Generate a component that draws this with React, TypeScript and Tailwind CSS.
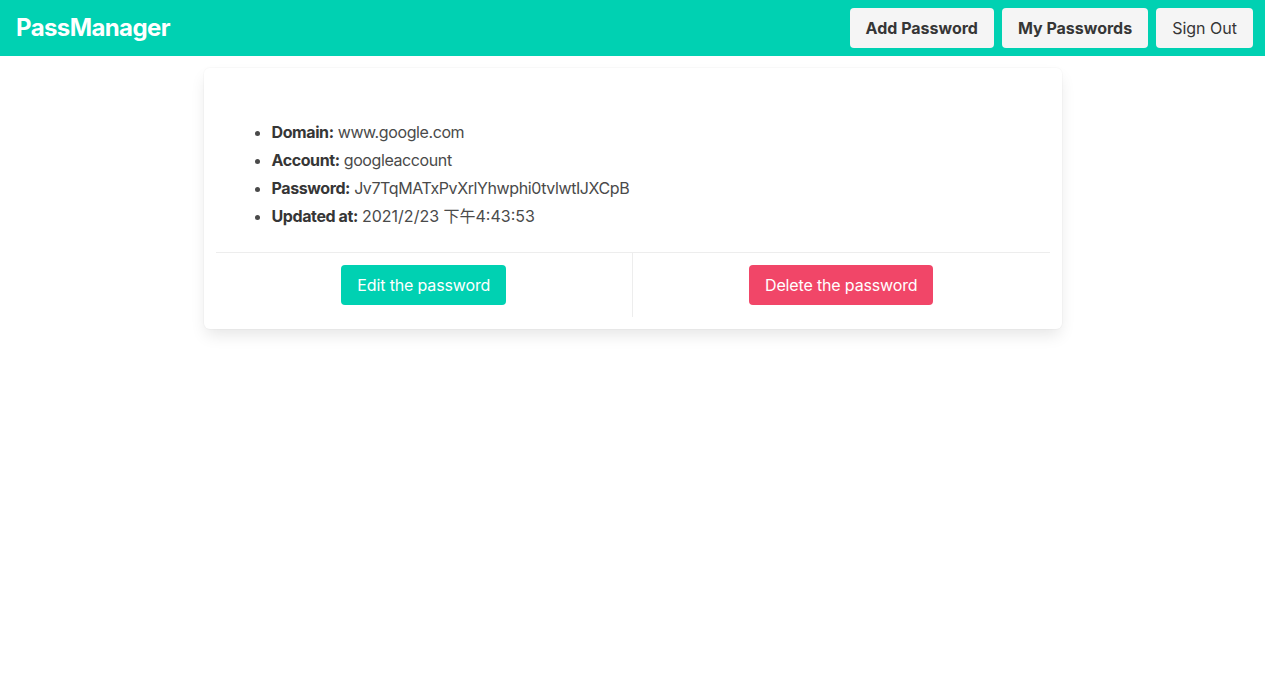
const font = "font-['Inter','Noto_Sans_CJK_SC',sans-serif]";

function NavButton({ label, bold }: { label: string; bold?: boolean }) {
  return (
    <button
      className={`h-10 rounded-[4px] bg-[#f5f5f5] px-4 text-base text-[#363636] ${
        bold ? "font-bold" : "font-normal"
      }`}
    >
      {label}
    </button>
  );
}

function Info({ label, value, loose }: { label: string; value: string; loose?: boolean }) {
  return (
    <li>
      <strong className="font-bold text-[#363636]">{label}</strong>{" "}
      <span className={loose ? "tracking-normal" : ""}>{value}</span>
    </li>
  );
}

export default function App() {
  return (
    <div className={`min-h-[698px] w-[1265px] bg-white ${font}`}>
      <nav className="flex h-14 items-center justify-between bg-[#00d1b2] pl-4 pr-3">
        <span className="text-[24px] font-bold tracking-[-0.6px] text-white">PassManager</span>
        <div className="flex items-center gap-2">
          <NavButton label="Add Password" bold />
          <NavButton label="My Passwords" bold />
          <NavButton label="Sign Out" />
        </div>
      </nav>

      <div className="mx-auto mt-3 w-[858px] rounded-md bg-white p-3 shadow-[0_8px_16px_-2px_rgba(10,10,10,0.1),0_0_0_1px_rgba(10,10,10,0.02)]">
        <div className="pt-[38px] pb-[22px] pl-[42px]">
          <ul className="list-disc pl-[14px] text-base leading-[28px] tracking-[-0.4px] text-[#4a4a4a] marker:text-[#4a4a4a]">
            <Info label="Domain:" value="www.google.com" />
            <Info label="Account:" value="googleaccount" />
            <Info label="Password:" value="Jv7TqMATxPvXrlYhwphi0tvlwtIJXCpB" />
            <Info label="Updated at:" value="2021/2/23 下午4:43:53" loose />
          </ul>
        </div>
        <div className="flex border-t border-[#ededed]">
          <div className="flex flex-1 justify-center border-r border-[#ededed] py-3">
            <button className="h-10 rounded-[4px] bg-[#00d1b2] px-4 text-base tracking-[-0.15px] text-white">
              Edit the password
            </button>
          </div>
          <div className="flex flex-1 justify-center py-3">
            <button className="h-10 rounded-[4px] bg-[#f14668] px-4 text-base tracking-[-0.15px] text-white">
              Delete the password
            </button>
          </div>
        </div>
      </div>
    </div>
  );
}
